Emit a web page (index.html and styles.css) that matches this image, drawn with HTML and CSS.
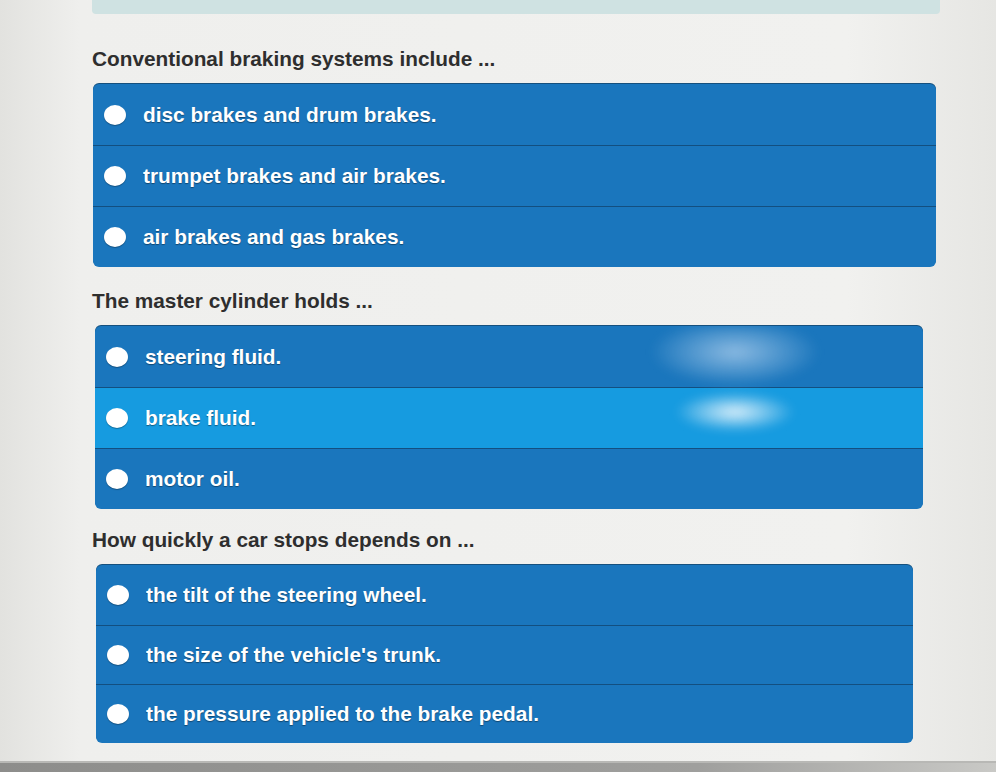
FILE: index.html
```html
<!DOCTYPE html>
<html lang="en">

<head>
    <meta charset="UTF-8">
    <meta name="viewport" content="width=device-width, initial-scale=1.0">
    <title>Brakes Quiz</title>
    <link rel="stylesheet" href="styles.css">
</head>

<body>
    <div class="top-bar"></div>

    <div class="quiz">
        <div class="question">
            <h2>Conventional braking systems include ...</h2>
            <ul class="options options-1">
                <li><span class="radio"></span>disc brakes and drum brakes.</li>
                <li><span class="radio"></span>trumpet brakes and air brakes.</li>
                <li><span class="radio"></span>air brakes and gas brakes.</li>
            </ul>
        </div>

        <div class="question">
            <h2>The master cylinder holds ...</h2>
            <ul class="options options-2">
                <li><span class="radio"></span>steering fluid.</li>
                <li class="selected"><span class="radio"></span>brake fluid.</li>
                <li><span class="radio"></span>motor oil.</li>
                <!-- light reflection on the screen -->
                <div class="glare"></div>
            </ul>
        </div>

        <div class="question last">
            <h2>How quickly a car stops depends on ...</h2>
            <ul class="options options-3">
                <li><span class="radio"></span>the tilt of the steering wheel.</li>
                <li><span class="radio"></span>the size of the vehicle's trunk.</li>
                <li><span class="radio"></span>the pressure applied to the brake pedal.</li>
            </ul>
        </div>
    </div>

    <div class="bottom-edge"></div>
</body>

</html>
```

FILE: styles.css
```css
body {
    margin: 0;
    font-family: "Liberation Sans", Arial, sans-serif;
    background: linear-gradient(to right, #e2e2df, #efefed 8%, #f1f1ef 85%, #e6e6e3);
    height: 772px;
    overflow: hidden;
    position: relative;
}

.top-bar {
    height: 14px;
    margin: 0 56px 0 92px;
    background: #cfe2e2;
    border-radius: 0 0 4px 4px;
}

.quiz {
    padding-left: 92px;
    padding-top: 33px;
}

.question h2 {
    margin: 0 0 14px 0;
    font-size: 20.8px;
    line-height: 23px;
    font-weight: bold;
    color: #2e2e2e;
}

.question + .question h2 {
    margin-top: 22px;
}

.question.last h2 {
    margin-top: 19px;
}

.options {
    position: relative;
    overflow: hidden;
    margin: 0;
    padding: 0;
    list-style-type: none;
    background: #1a76bd;
    border-radius: 6px;
    box-shadow: 0 -1px 0 #15507e;
}

.options-1 {
    width: 843px;
    margin-left: 1px;
}

.options-2 {
    width: 828px;
    margin-left: 3px;
}

.options-3 {
    width: 817px;
    margin-left: 4px;
}

.options li {
    display: flex;
    align-items: center;
    height: 60px;
    padding-left: 11px;
    color: #ffffff;
    font-size: 20.8px;
    font-weight: bold;
    letter-spacing: 0;
    text-shadow: 0 1px 1px rgba(0, 0, 0, 0.4);
    border-top: 1px solid #134f80;
}

.options li:first-child {
    border-top: none;
    height: 61px;
}

.options-3 li {
    height: 58px;
}

.options-3 li:first-child {
    height: 60px;
}

.options li.selected {
    background: #169be0;
}

.radio {
    width: 22px;
    height: 20px;
    margin-right: 17px;
    border-radius: 50%;
    background: #ffffff;
    box-shadow: 0 1px 1px rgba(0, 0, 0, 0.3);
}

.glare {
    position: absolute;
    left: 555px;
    top: 0;
    width: 170px;
    height: 115px;
    background:
        radial-gradient(ellipse 60px 20px at 85px 86px, rgba(255, 255, 255, 0.85), rgba(255, 255, 255, 0) 100%),
        radial-gradient(ellipse 85px 34px at 85px 26px, rgba(215, 232, 250, 0.6), rgba(215, 232, 250, 0) 100%);
    filter: blur(5px);
    pointer-events: none;
}

.bottom-edge {
    position: absolute;
    left: 0;
    right: 0;
    bottom: 0;
    height: 9px;
    background: linear-gradient(to right, #8d8d8b, #9f9f9d 70%, #c9c9c6);
    border-top: 2px solid #b8b8b5;
}
```
